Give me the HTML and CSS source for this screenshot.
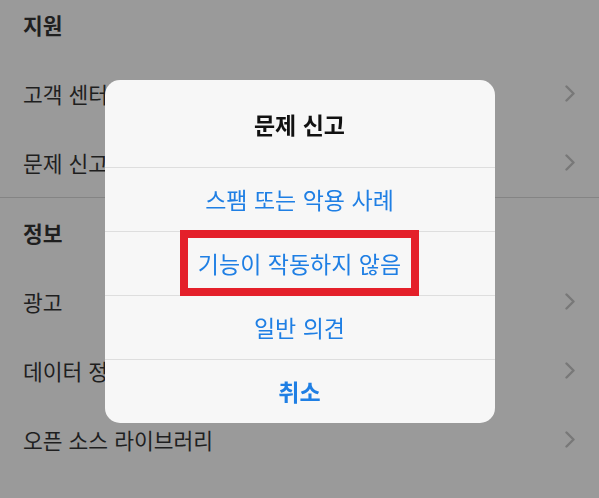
FILE: index.html
```html
<!DOCTYPE html>
<html lang="ko">

<head>
  <meta charset="UTF-8">
  <meta name="viewport" content="width=device-width, initial-scale=1.0">
  <title>설정</title>
  <link rel="stylesheet" href="styles.css">
</head>

<body>
  <div class="settings">
    <div class="section">
      <div class="row header">지원</div>
      <div class="row">고객 센터<svg class="chevron" viewBox="0 0 10 17"><polyline points="1.5,1.5 8.5,8.5 1.5,15.5" /></svg></div>
      <div class="row">문제 신고<svg class="chevron" viewBox="0 0 10 17"><polyline points="1.5,1.5 8.5,8.5 1.5,15.5" /></svg></div>
    </div>
    <div class="section">
      <div class="row header">정보</div>
      <div class="row">광고<svg class="chevron" viewBox="0 0 10 17"><polyline points="1.5,1.5 8.5,8.5 1.5,15.5" /></svg></div>
      <div class="row">데이터 정책<svg class="chevron" viewBox="0 0 10 17"><polyline points="1.5,1.5 8.5,8.5 1.5,15.5" /></svg></div>
      <div class="row">오픈 소스 라이브러리<svg class="chevron" viewBox="0 0 10 17"><polyline points="1.5,1.5 8.5,8.5 1.5,15.5" /></svg></div>
    </div>
  </div>

  <div class="overlay">
    <div class="sheet">
      <div class="sheet-title">문제 신고</div>
      <div class="sheet-option">스팸 또는 악용 사례</div>
      <div class="sheet-option"><span class="highlight">기능이 작동하지 않음</span></div>
      <div class="sheet-option">일반 의견</div>
      <div class="sheet-option cancel">취소</div>
    </div>
  </div>
</body>

</html>
```

FILE: styles.css
```css
* {
  box-sizing: border-box;
  margin: 0;
  padding: 0;
  font-family: 'Noto Sans CJK KR', 'Noto Sans', sans-serif;
}

body {
  background: #9a9a9a;
  height: 498px;
  overflow: hidden;
}

.settings {
  margin-top: -10px;
}

.section + .section {
  border-top: 1px solid #848484;
}

.row {
  height: 69px;
  display: flex;
  align-items: center;
  justify-content: space-between;
  padding: 0 23px 0 23px;
  font-size: 21.5px;
  color: #1f1f1f;
}

.row.header {
  font-weight: 700;
}

.chevron {
  width: 10px;
  height: 17px;
  margin-right: 1px;
  fill: none;
  stroke: #787878;
  stroke-width: 2.4;
  stroke-linecap: round;
  stroke-linejoin: round;
}

.overlay {
  position: fixed;
  top: 0;
  left: 0;
  right: 0;
  bottom: 0;
  display: flex;
  justify-content: center;
  align-items: center;
  padding-top: 4px;
}

.sheet {
  width: 390px;
  background: #f7f7f7;
  border-radius: 15px;
  overflow: hidden;
}

.sheet-title {
  height: 87px;
  display: flex;
  align-items: center;
  justify-content: center;
  font-size: 23px;
  font-weight: 700;
  color: #111;
  padding-top: 1px;
}

.sheet-option {
  height: 64px;
  border-top: 1px solid #dedede;
  display: flex;
  align-items: center;
  justify-content: center;
  font-size: 23px;
  color: #1f7fe4;
}

.sheet-option.cancel {
  font-weight: 700;
}

.highlight {
  display: flex;
  align-items: center;
  height: 66px;
  margin-top: -1px;
  padding: 0 10px;
  border: 8px solid #e4202a;
}
```
